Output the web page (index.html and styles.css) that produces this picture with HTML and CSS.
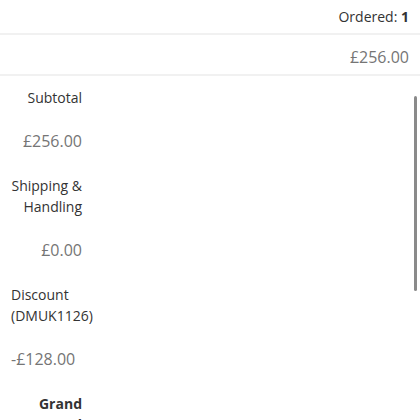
FILE: index.html
```html
<!DOCTYPE html>
<html>
<head>
<meta charset="utf-8">
<link rel="stylesheet" href="styles.css">
</head>
<body>
<div class="page">
  <div class="row-line ordered">Ordered: <strong>1</strong></div>
  <div class="row-line price">£256.00</div>
  <div class="totals">
    <div class="cell label">Subtotal</div>
    <div class="cell amount">£256.00</div>
    <div class="cell label">Shipping &amp; Handling</div>
    <div class="cell amount">£0.00</div>
    <div class="cell label left">Discount (DMUK1126)</div>
    <div class="cell amount left">-£128.00</div>
    <div class="cell label grand">Grand Total</div>
    <div class="cell amount grand">£128.00</div>
  </div>
  <div class="scrollbar"></div>
</div>
</body>
</html>
```
FILE: styles.css
```css
html, body {
  margin: 0;
  padding: 0;
  background: #fff;
  overflow: hidden;
}
.page {
  position: relative;
  width: 420px;
  height: 420px;
  overflow: hidden;
  font-family: "Open Sans", sans-serif;
  font-size: 14px;
  line-height: 21px;
  color: #333;
}
.row-line {
  text-align: right;
  padding: 6px 11px 0 0;
  height: 27px;
  border-bottom: 2px solid #f1f1f1;
}
.ordered strong {
  font-weight: 700;
}
.price {
  color: #757575;
  font-size: 16px;
  padding-top: 12px;
  height: 27px;
}
.totals {
  width: 71px;
  padding: 11px 0 0 11px;
}
.cell {
  text-align: right;
  padding-bottom: 23px;
}
.cell.amount {
  color: #757575;
  font-size: 16px;
}
.cell.left {
  text-align: left;
}
.cell.grand {
  font-weight: 700;
}
.scrollbar {
  position: absolute;
  left: 414px;
  top: 96px;
  width: 3px;
  height: 195px;
  border-radius: 2px;
  background: #8a8a8a;
}
```
